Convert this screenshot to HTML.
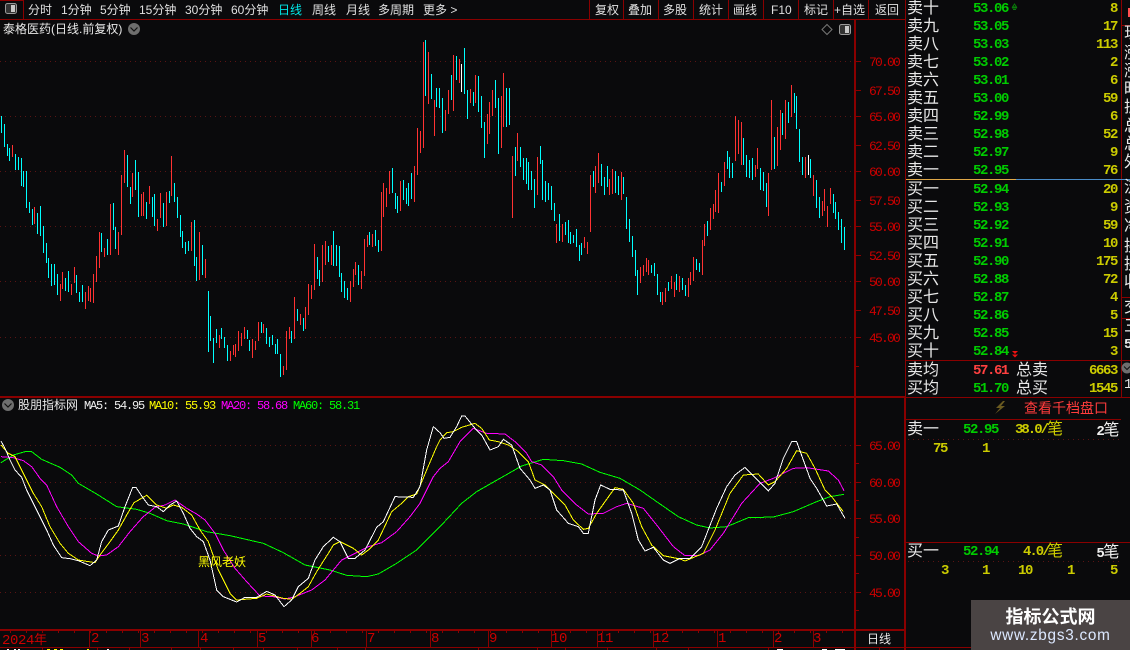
<!DOCTYPE html>
<html lang="zh-CN"><head><meta charset="utf-8"><title>K线</title>
<style>
html,body{margin:0;padding:0;background:#0a0a0c}
#p{position:relative;width:1130px;height:650px;overflow:hidden;background:#0a0a0c;font-family:"Liberation Sans","WenQuanYi Zen Hei","Noto Sans CJK SC",sans-serif;color:#e8e8e8}
#p svg{position:absolute;left:0;top:0}
#p span{position:absolute;white-space:pre;line-height:18px;height:18px}
.tb{font-size:12px;top:1px;color:#e0e0e0;letter-spacing:0}
#p .ax{font:13px/18px "Liberation Mono",monospace;letter-spacing:-1.8px;color:#cc0000;left:869px;margin-top:2px}
#p .tm{font:14px/16px "Liberation Mono",monospace;letter-spacing:-.4px;color:#cc0000;top:631px}
#p .lb{font-size:16px;left:907px;color:#e8e8e8;margin-top:1px}
#p .g{font:bold 14px/18px "Liberation Mono",monospace;letter-spacing:-1.4px;color:#00cc00;left:973px;margin-top:1px}
#p .v{font:bold 14px/18px "Liberation Mono",monospace;letter-spacing:-1.4px;color:#cccc00;right:13px;text-align:right;margin-top:1px}
#p .m{font:12px/18px "Liberation Mono",monospace;letter-spacing:-1.2px;top:397px}
#p .r{font-size:16px;left:1124px;color:#e8e8e8;margin-top:1px}
</style></head><body><div id="p">
<svg width="1130" height="650" shape-rendering="crispEdges" fill="none">
<g stroke="#5a1414" stroke-dasharray="1 4">
<path d="M0 61.5H855M0 116.5H855M0 171.5H855M0 226.5H855M0 281.5H855M0 337.5H855M0 445.5H855M0 482.5H855M0 518.5H855M0 555.5H855M0 592.5H855M908 439.5H1120M908 561.5H1120"/>
</g>
<path stroke="#00ffff" d="M1.5 116V133M4.5 124V147M7.5 144V156M9.5 148V161M15.5 154V170M18.5 157V170M21.5 158V186M23.5 171V187M26.5 171V208M29.5 202V213M32.5 209V225M37.5 213V234M40.5 206V236M43.5 226V253M46.5 243V263M48.5 258V278M51.5 264V286M54.5 264V285M57.5 274V295M65.5 278V291M68.5 271V292M76.5 275V293M79.5 292V302M82.5 285V302M101.5 233V252M107.5 239V255M113.5 203V230M115.5 227V249M127.5 155V187M130.5 187V204M135.5 160V190M138.5 172V217M146.5 202V219M152.5 197V217M154.5 194V226M163.5 203V227M169.5 191V203M174.5 183V202M177.5 197V218M180.5 215V237M182.5 231V248M185.5 242V254M188.5 241V251M194.5 220V266M196.5 257V281M202.5 245V275M208.5 291V352M210.5 316V341M213.5 338V363M216.5 329V343M221.5 328V339M224.5 337V348M227.5 345V361M247.5 330V339M249.5 340V351M261.5 322V333M266.5 328V344M269.5 337V347M272.5 335V345M275.5 344V354M277.5 339V354M280.5 354V377M291.5 331V343M297.5 309V321M303.5 318V331M317.5 257V279M319.5 270V286M328.5 246V262M333.5 231V266M336.5 245V266M339.5 246V277M341.5 273V292M344.5 281V298M347.5 288V300M358.5 265V285M369.5 232V245M375.5 230V246M378.5 240V252M392.5 168V193M395.5 193V209M397.5 196V213M403.5 180V200M406.5 188V204M408.5 183V206M411.5 173V199M425.5 40V96M431.5 74V99M436.5 88V107M439.5 88V108M442.5 98V133M451.5 75V100M456.5 56V80M464.5 48V94M467.5 90V119M473.5 92V106M478.5 76V112M481.5 96V128M484.5 122V158M495.5 80V108M498.5 98V154M506.5 88V127M509.5 88V125M515.5 147V176M520.5 147V167M523.5 158V180M526.5 158V184M528.5 162V190M531.5 171V190M534.5 179V208M540.5 146V164M542.5 160V200M545.5 181V202M548.5 183V200M551.5 186V210M554.5 203V221M559.5 214V241M565.5 222V235M568.5 220V243M570.5 232V244M573.5 235V243M576.5 229V247M579.5 245V261M581.5 243V255M593.5 171V187M601.5 164V186M604.5 177V195M607.5 166V187M615.5 171V193M618.5 176V195M623.5 177V194M626.5 197V229M629.5 219V242M632.5 236V257M635.5 250V276M637.5 270V295M651.5 265V273M654.5 263V276M657.5 274V295M660.5 292V302M668.5 282V291M676.5 274V290M682.5 278V290M685.5 285V296M696.5 259V270M699.5 263V272M707.5 221V236M721.5 182V192M727.5 151V169M729.5 157V178M732.5 163V178M743.5 138V165M746.5 155V177M749.5 160V178M752.5 158V180M760.5 168V190M763.5 172V191M766.5 183V207M774.5 137V169M782.5 113V135M788.5 102V123M794.5 93V113M796.5 96V129M799.5 129V162M802.5 157V175M810.5 159V178M816.5 180V208M819.5 197V218M833.5 194V213M835.5 202V219M838.5 212V230M841.5 219V243M844.5 227V250"/>
<path stroke="#ff3232" d="M12.5 145V157M34.5 207V224M60.5 284V301M62.5 272V289M71.5 284V295M74.5 267V283M85.5 292V309M88.5 286V301M90.5 288V302M93.5 274V303M96.5 256V282M99.5 232V268M104.5 248V257M110.5 204V255M118.5 232V255M121.5 175V235M124.5 150V183M132.5 173V197M141.5 194V216M143.5 192V216M149.5 186V204M157.5 219V231M160.5 193V218M166.5 192V226M171.5 156V196M191.5 222V251M199.5 232V280M205.5 259V278M219.5 335V348M230.5 351V361M233.5 345V355M235.5 344V357M238.5 331V351M241.5 333V346M244.5 327V339M252.5 339V358M255.5 341V350M258.5 322V341M263.5 324V333M283.5 366V375M286.5 331V370M289.5 327V339M294.5 297V339M300.5 314V325M305.5 307V329M308.5 284V315M311.5 285V299M314.5 244V290M322.5 245V282M325.5 241V265M331.5 245V265M350.5 281V302M353.5 269V287M355.5 262V275M361.5 271V289M364.5 239V276M367.5 235V247M372.5 234V247M381.5 192V251M383.5 183V217M386.5 188V207M389.5 171V194M400.5 181V211M414.5 166V202M417.5 128V175M420.5 131V153M423.5 42V148M428.5 52V104M434.5 100V136M445.5 110V131M448.5 90V114M453.5 55V111M459.5 59V83M470.5 89V103M475.5 75V103M487.5 114V144M489.5 102V134M492.5 90V116M501.5 96V148M503.5 73V127M512.5 156V218M517.5 133V161M537.5 157V195M556.5 224V243M562.5 224V242M584.5 237V248M587.5 242V254M590.5 175V232M595.5 166V193M598.5 153V183M609.5 179V195M612.5 169V194M621.5 172V200M640.5 267V283M643.5 265V276M646.5 258V272M648.5 260V275M662.5 292V305M665.5 288V302M671.5 276V289M674.5 282V297M679.5 276V292M688.5 278V297M690.5 272V285M693.5 257V281M702.5 240V275M704.5 224V246M710.5 208V230M713.5 204V219M715.5 190V212M718.5 173V213M724.5 162V186M735.5 116V161M738.5 120V154M741.5 122V165M755.5 165V177M757.5 148V169M768.5 173V216M771.5 100V170M777.5 127V166M780.5 110V150M785.5 100V139M791.5 85V117M805.5 157V178M813.5 175V196M822.5 201V216M824.5 189V211M827.5 206V227M830.5 188V204"/>
<path stroke="#ffffff" d="M461.5 64V92M808.5 155V175"/>

<g transform="translate(0 390) scale(.33333)" stroke-width="3">
<polyline stroke="#00ff00" points="3,218 40,195 75,185 95,185 125,208 180,232 215,255 235,280 290,312 350,350 410,358 450,370 500,392 550,402 620,425 690,437 790,460 850,488 915,525 990,540 1040,556 1100,560 1135,552 1190,520 1250,480 1300,430 1320,410"/>
<polyline stroke="#ff00ff" points="3,200 40,203 70,212 95,230 120,265 140,285 170,350 205,410 235,455 275,490 295,498 320,495 355,470 390,425 430,380 465,352 495,345 525,330 560,355 590,372 615,390 645,430 670,480 705,535 740,575 780,618 820,620 855,627 885,620 935,600 975,570 1025,510 1075,485 1105,470 1145,458 1190,425 1230,380 1260,340 1300,260 1320,235"/>
<polyline stroke="#ffff00" points="3,165 25,190 45,200 70,250 100,310 125,350 150,410 180,460 205,490 235,510 285,518 300,495 330,455 355,420 380,375 402,338 440,316 470,345 500,355 520,345 545,352 575,375 600,420 625,455 655,540 690,610 710,630 770,625 800,612 850,625 875,628 900,610 925,590 950,545 985,490 1000,465 1020,455 1060,475 1085,495 1105,480 1135,450 1175,365 1205,340 1225,320 1250,312 1280,240 1310,170 1320,150"/>
<polyline stroke="#ffffff" points="3,153 15,175 30,210 45,240 65,262 80,300 100,340 120,380 140,420 160,465 185,503 210,506 235,512 270,527 290,510 305,455 325,420 355,408 375,350 398,292 408,292 430,325 445,345 470,350 490,365 510,345 530,333 550,370 570,415 590,440 610,455 630,510 650,600 670,620 710,636 735,622 770,622 800,604 825,615 852,650 875,630 895,590 925,565 945,510 970,470 1000,442 1020,455 1045,505 1065,505 1095,480 1130,412 1150,395 1185,320 1240,322 1260,290 1280,180 1300,110 1320,128"/>
</g>
<g transform="translate(440 390) scale(.33333)" stroke-width="3">
<polyline stroke="#00ff00" points="0,410 65,340 110,305 180,265 245,228 310,208 370,212 425,222 480,247 540,265 600,300 650,335 715,380 770,405 810,414 860,410 925,383 1000,381 1060,365 1130,335 1170,320 1212,313"/>
<polyline stroke="#ff00ff" points="0,235 25,215 60,155 100,115 140,130 195,132 225,155 260,190 275,215 305,225 340,260 365,300 410,345 445,372 490,370 530,350 560,340 610,355 650,405 700,470 735,497 775,497 810,480 850,430 905,340 960,280 1000,265 1060,235 1100,233 1165,243 1195,270 1212,302"/>
<polyline stroke="#ffff00" points="0,150 20,128 40,125 65,112 105,100 125,115 148,150 175,155 205,165 235,185 265,215 285,270 315,285 350,320 375,345 400,390 430,418 445,415 470,370 495,335 525,293 550,298 580,340 605,410 635,465 670,497 720,507 735,513 790,490 825,420 870,310 910,255 955,252 985,285 1005,275 1040,235 1070,182 1100,190 1125,235 1155,300 1175,320 1210,365"/>
<polyline stroke="#ffffff" points="0,128 12,145 30,142 50,110 65,78 75,78 105,115 125,135 150,180 175,170 190,148 215,165 240,235 270,270 285,295 310,285 330,300 350,360 385,400 415,410 430,430 445,430 465,330 482,285 510,298 550,300 575,370 595,450 615,483 640,472 670,510 690,520 720,505 750,505 785,470 830,355 860,290 885,255 915,232 945,262 985,303 1005,280 1030,205 1055,155 1070,155 1110,265 1130,295 1160,348 1190,342 1215,385"/>
</g>

<g stroke="#8a0000">
<path d="M0 19.5H905M23.5 0V19M589.5 0V19M623.5 0V19M658.5 0V19M693.5 0V19M728.5 0V19M763.5 0V19M798.5 0V19M833.5 0V19M868.5 0V19M905.5 0V397M0 0.5H23"/>
<path stroke-width="2" d="M855 19V650M0 397H905M0 630H905M905 397V650"/>
<path d="M855 61.5H861M855 90.5H861M855 116.5H861M855 145.5H861M855 171.5H861M855 200.5H861M855 226.5H861M855 255.5H861M855 281.5H861M855 310.5H861M855 337.5H861M855 366.5H859M855 445.5H861M855 463.5H859M855 482.5H861M855 500.5H859M855 518.5H861M855 537.5H859M855 555.5H861M855 573.5H859M855 592.5H861M855 610.5H859"/>
<path d="M89.5 630V647M140.5 630V647M198.5 630V647M257.5 630V647M311.5 630V647M366.5 630V647M430.5 630V647M488.5 630V647M551.5 630V647M597.5 630V647M653.5 630V647M717.5 630V647M773.5 630V647M813.5 630V647"/>
<path d="M0 647.5H1130"/>
<path d="M42.5 647V650M97.5 647V650M129.5 647V650M171.5 647V650M200.5 647V650M233.5 647V650M263.5 647V650M297.5 647V650M337.5 647V650M365.5 647V650M478.5 647V650M537.5 647V650M565.5 647V650M607.5 647V650M656.5 647V650M688.5 647V650M768.5 647V650M855.5 647V650M879.5 647V650"/>
<path d="M906 360.5H1130M906 397.5H1130M906 419.5H1121M906 542.5H1130M1121.5 0V397M1121 25.5H1130M1121 297.5H1130M1121 318.5H1130"/>
</g>
<path stroke="#8a0000" stroke-width="3" stroke-dasharray="1 15" d="M10 631.5H855"/>
<path stroke="#e0a848" d="M906 179.5H1016"/>
<path stroke="#4a8cc8" d="M1016 179.5H1121M1121 179.5H1130"/>

<path stroke="#fff" d="M7 649.5H9M14 649.5H16M18 649.5H20M107 649.5H109M777 649.5H783M822 649.5H827M835 649.5H845"/>
<path stroke="#ff0" d="M47 649.5H50M54 649.5H57M60 649.5H63M87 649.5H89"/>
</svg>

<svg width="1130" height="650" fill="none">
<rect x="5.5" y="3.5" width="11" height="10" rx="2" stroke="#999" fill="#333"/><rect x="11" y="5" width="4" height="7" fill="#c8c8c8"/>
<rect x="839.5" y="24.5" width="11" height="10" rx="2" stroke="#999" fill="#333"/><rect x="845" y="26" width="4" height="7" fill="#c8c8c8"/>
<path d="M827 24.5L832 29.5L827 34.5L822 29.5Z" stroke="#777"/>
<circle cx="134" cy="29" r="6" fill="#6e6e6e"/><path d="M130.5 27.5L134 31L137.5 27.5" stroke="#111" stroke-width="1.2"/>
<circle cx="8" cy="405" r="6" fill="#6e6e6e"/><path d="M4.5 403.5L8 407L11.5 403.5" stroke="#111" stroke-width="1.2"/>
<circle cx="1127" cy="368" r="5.5" fill="#6e6e6e"/><path d="M1124 366.5L1127 369.5L1130 366.5" stroke="#111"/>
<path d="M1003 401L996 408H1000L995 414L1005 406H1001L1005 401Z" fill="#6a5a20"/>
<path d="M1012 351H1018L1015 354ZM1012 354.5H1018L1015 357.5Z" fill="#ee1111"/>
<path d="M1012 8H1017M1014.5 4L1012.5 7H1016.5ZM1013 9.5H1016" stroke="#0a7a0a"/>
</svg>

<span class="tb" style="left:28px">分时</span>
<span class="tb" style="left:61px">1分钟</span>
<span class="tb" style="left:100px">5分钟</span>
<span class="tb" style="left:139px">15分钟</span>
<span class="tb" style="left:185px">30分钟</span>
<span class="tb" style="left:231px">60分钟</span>
<span class="tb" style="left:278px;color:#00e8e8">日线</span>
<span class="tb" style="left:312px">周线</span>
<span class="tb" style="left:346px">月线</span>
<span class="tb" style="left:378px">多周期</span>
<span class="tb" style="left:423px">更多 &gt;</span>
<span class="tb" style="left:595px">复权</span>
<span class="tb" style="left:628px">叠加</span>
<span class="tb" style="left:663px">多股</span>
<span class="tb" style="left:699px">统计</span>
<span class="tb" style="left:733px">画线</span>
<span class="tb" style="left:771px">F10</span>
<span class="tb" style="left:804px">标记</span>
<span class="tb" style="left:834px">+自选</span>
<span class="tb" style="left:875px">返回</span>

<span style="left:3px;top:20px;font-size:12px">泰格医药(日线.前复权)</span>

<span class="ax" style="top:52px">70.00</span><span class="ax" style="top:81px">67.50</span><span class="ax" style="top:107px">65.00</span><span class="ax" style="top:136px">62.50</span><span class="ax" style="top:162px">60.00</span><span class="ax" style="top:191px">57.50</span><span class="ax" style="top:217px">55.00</span><span class="ax" style="top:246px">52.50</span><span class="ax" style="top:272px">50.00</span><span class="ax" style="top:301px">47.50</span><span class="ax" style="top:328px">45.00</span>
<span class="ax" style="top:436px">65.00</span><span class="ax" style="top:473px">60.00</span><span class="ax" style="top:509px">55.00</span><span class="ax" style="top:546px">50.00</span><span class="ax" style="top:583px">45.00</span>

<span style="left:18px;top:396px;font-size:12px">股朋指标网</span>
<span class="m" style="left:84px;color:#f0f0f0">MA5: 54.95</span>
<span class="m" style="left:149px;color:#ffff00">MA10: 55.93</span>
<span class="m" style="left:221px;color:#ff00ff">MA20: 58.68</span>
<span class="m" style="left:293px;color:#00ff00">MA60: 58.31</span>
<span style="left:198px;top:553px;font-size:12px;color:#ffff00">黑风老妖</span>

<span class="tm" style="left:2px">2024<span style="position:static;font:13px/16px 'WenQuanYi Zen Hei','Noto Sans CJK SC',sans-serif">年</span></span>
<span class="tm" style="left:91px">2</span><span class="tm" style="left:141px">3</span><span class="tm" style="left:200px">4</span><span class="tm" style="left:258px">5</span><span class="tm" style="left:311px">6</span><span class="tm" style="left:367px">7</span><span class="tm" style="left:431px">8</span><span class="tm" style="left:489px">9</span><span class="tm" style="left:551px">10</span><span class="tm" style="left:597px">11</span><span class="tm" style="left:653px">12</span><span class="tm" style="left:718px">1</span><span class="tm" style="left:774px">2</span><span class="tm" style="left:813px">3</span>
<span style="left:867px;top:630px;font-size:12px;color:#e8e8e8">日线</span>

<span class="lb" style="top:-1px">卖十</span><span class="g" style="top:-1px">53.06</span><span class="v" style="top:-1px">8</span>
<span class="lb" style="top:17px">卖九</span><span class="g" style="top:17px">53.05</span><span class="v" style="top:17px">17</span>
<span class="lb" style="top:35px">卖八</span><span class="g" style="top:35px">53.03</span><span class="v" style="top:35px">113</span>
<span class="lb" style="top:53px">卖七</span><span class="g" style="top:53px">53.02</span><span class="v" style="top:53px">2</span>
<span class="lb" style="top:71px">卖六</span><span class="g" style="top:71px">53.01</span><span class="v" style="top:71px">6</span>
<span class="lb" style="top:89px">卖五</span><span class="g" style="top:89px">53.00</span><span class="v" style="top:89px">59</span>
<span class="lb" style="top:107px">卖四</span><span class="g" style="top:107px">52.99</span><span class="v" style="top:107px">6</span>
<span class="lb" style="top:125px">卖三</span><span class="g" style="top:125px">52.98</span><span class="v" style="top:125px">52</span>
<span class="lb" style="top:143px">卖二</span><span class="g" style="top:143px">52.97</span><span class="v" style="top:143px">9</span>
<span class="lb" style="top:161px">卖一</span><span class="g" style="top:161px">52.95</span><span class="v" style="top:161px">76</span>
<span class="lb" style="top:180px">买一</span><span class="g" style="top:180px">52.94</span><span class="v" style="top:180px">20</span>
<span class="lb" style="top:198px">买二</span><span class="g" style="top:198px">52.93</span><span class="v" style="top:198px">9</span>
<span class="lb" style="top:216px">买三</span><span class="g" style="top:216px">52.92</span><span class="v" style="top:216px">59</span>
<span class="lb" style="top:234px">买四</span><span class="g" style="top:234px">52.91</span><span class="v" style="top:234px">10</span>
<span class="lb" style="top:252px">买五</span><span class="g" style="top:252px">52.90</span><span class="v" style="top:252px">175</span>
<span class="lb" style="top:270px">买六</span><span class="g" style="top:270px">52.88</span><span class="v" style="top:270px">72</span>
<span class="lb" style="top:288px">买七</span><span class="g" style="top:288px">52.87</span><span class="v" style="top:288px">4</span>
<span class="lb" style="top:306px">买八</span><span class="g" style="top:306px">52.86</span><span class="v" style="top:306px">5</span>
<span class="lb" style="top:324px">买九</span><span class="g" style="top:324px">52.85</span><span class="v" style="top:324px">15</span>
<span class="lb" style="top:342px">买十</span><span class="g" style="top:342px">52.84</span><span class="v" style="top:342px">3</span>

<span class="lb" style="top:361px">卖均</span><span class="g" style="top:361px;color:#ff4040">57.61</span><span class="lb" style="top:361px;left:1016px">总卖</span><span class="v" style="top:361px">6663</span>
<span class="lb" style="top:379px">买均</span><span class="g" style="top:379px">51.70</span><span class="lb" style="top:379px;left:1016px">总买</span><span class="v" style="top:379px">1545</span>

<span style="left:1024px;top:399px;font-size:14px;color:#ff3c3c">查看千档盘口</span>

<span class="lb" style="top:420px">卖一</span><span class="g" style="top:420px;left:963px">52.95</span><span class="v" style="top:420px;left:1015px;right:auto;letter-spacing:-2px">38.0/</span><span class="lb" style="top:420px;left:1047px;color:#cccc00">笔</span><span class="v" style="top:418px;right:12px;color:#f0f0f0">2<span style="position:static;font:16px/18px 'WenQuanYi Zen Hei','Noto Sans CJK SC',sans-serif">笔</span></span>
<span class="v" style="top:439px;left:933px;right:auto">75</span><span class="v" style="top:439px;left:982px;right:auto">1</span>

<span class="lb" style="top:542px">买一</span><span class="g" style="top:542px;left:963px">52.94</span><span class="v" style="top:542px;left:1023px;right:auto;letter-spacing:-2px">4.0/</span><span class="lb" style="top:542px;left:1047px;color:#cccc00">笔</span><span class="v" style="top:540px;right:12px;color:#f0f0f0">5<span style="position:static;font:16px/18px 'WenQuanYi Zen Hei','Noto Sans CJK SC',sans-serif">笔</span></span>
<span class="v" style="top:561px;left:941px;right:auto">3</span><span class="v" style="top:561px;left:982px;right:auto">1</span><span class="v" style="top:561px;left:1018px;right:auto">10</span><span class="v" style="top:561px;left:1067px;right:auto">1</span><span class="v" style="top:561px;left:1110px;right:auto">5</span>

<span class="r" style="top:24px">现</span><span class="r" style="top:44px">涨</span><span class="r" style="top:62px">涨</span><span class="r" style="top:80px">昨</span><span class="r" style="top:98px">振</span><span class="r" style="top:117px">总</span><span class="r" style="top:135px">总</span><span class="r" style="top:153px">外</span>
<span class="r" style="top:178px">流</span><span class="r" style="top:198px">资</span><span class="r" style="top:217px">净</span><span class="r" style="top:237px">换</span><span class="r" style="top:255px">换</span><span class="r" style="top:273px">收</span><span class="r" style="top:298px">交</span><span class="r" style="top:317px">三</span>
<span class="v" style="top:335px;left:1124px;right:auto;color:#e8e8e8">5</span><span class="v" style="top:375px;left:1124px;right:auto;color:#e8e8e8;font-weight:normal">1</span>

<div style="position:absolute;left:1128px;top:8px;width:2px;height:9px;background:#ff5050"></div>
<div style="position:absolute;left:971px;top:600px;width:159px;height:50px;background:#4a4444">
<span style="left:0;width:159px;text-align:center;top:6px;font-size:18px;font-weight:bold;color:#fff;line-height:22px;height:22px">指标公式网</span>
<span style="left:0;width:159px;text-align:center;top:27px;font:15.3px/18px 'Liberation Sans',sans-serif;color:#dce8ff;letter-spacing:.75px">www.zbgs3.com</span>
</div>
</div></body></html>
